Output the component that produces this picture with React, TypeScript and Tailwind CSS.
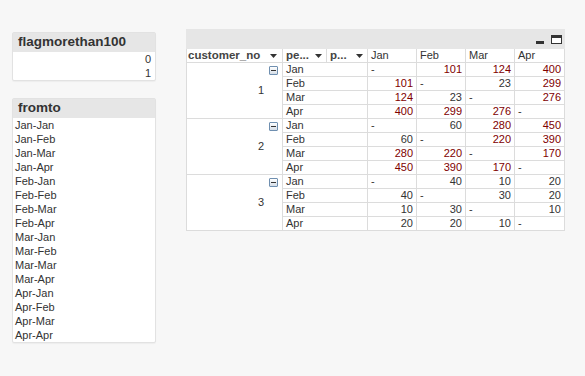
const months = ["Jan", "Feb", "Mar", "Apr"];

const fromto = months.flatMap((a) => months.map((b) => `${a}-${b}`));

// values per customer: rows = from month, cols = to month (null = "-")
const data: { id: number; rows: (number | null)[][] }[] = [
  {
    id: 1,
    rows: [
      [null, 101, 124, 400],
      [101, null, 23, 299],
      [124, 23, null, 276],
      [400, 299, 276, null],
    ],
  },
  {
    id: 2,
    rows: [
      [null, 60, 280, 450],
      [60, null, 220, 390],
      [280, 220, null, 170],
      [450, 390, 170, null],
    ],
  },
  {
    id: 3,
    rows: [
      [null, 40, 10, 20],
      [40, null, 30, 20],
      [10, 30, null, 10],
      [20, 20, 10, null],
    ],
  },
];

function Arrow() {
  return (
    <svg width="7" height="4" viewBox="0 0 7 4" className="shrink-0">
      <path d="M0 0h7L3.5 4z" fill="#333" />
    </svg>
  );
}

function Collapse() {
  return (
    <div className="w-[9px] h-[9px] border border-[#6f8fb0] rounded-[1px] bg-gradient-to-b from-white to-[#d5dde6] flex items-center justify-center">
      <div className="w-[5px] h-[1px] bg-[#333]" />
    </div>
  );
}

function ListBox({ title, items, align }: { title: string; items: string[]; align: "left" | "right" }) {
  return (
    <div className="w-[144px] border border-[#e2e2e2] rounded-[2px] bg-white shadow-[0_1px_1px_rgba(0,0,0,0.04)]">
      <div className="h-[19px] bg-[#e6e6e6] pl-[5px] flex items-center text-[13.5px] font-bold text-[#333]">
        {title}
      </div>
      <div>
        {items.map((it) => (
          <div
            key={it}
            className={`h-[14px] leading-[14px] text-[11px] text-[#333] ${
              align === "right" ? "text-right pr-[4px]" : "pl-[2px]"
            }`}
          >
            {it}
          </div>
        ))}
      </div>
    </div>
  );
}

export default function App() {
  const cell = "border-r border-b border-[#dcdcdc] h-[14px] leading-[13px] text-[11px]";
  return (
    <div
      className="w-[585px] h-[376px] bg-[#f7f7f7] flex overflow-hidden"
      style={{ fontFamily: '"Liberation Sans", Arial, sans-serif' }}
    >
      <div className="ml-[12px] mt-[32px] flex flex-col gap-[17px]">
        <ListBox title="flagmorethan100" items={["0", "1"]} align="right" />
        <ListBox title="fromto" items={fromto} align="left" />
      </div>

      <div className="ml-[30px] mt-[29px] w-[379px]">
        <div className="h-[20px] bg-[#e6e6e6] flex items-center justify-end pr-[3px] gap-[7px]">
          <div className="w-[8px] h-[3px] bg-[#333] mt-[6px]" />
          <div className="w-[11px] h-[9px] border border-[#333] border-t-[3px] bg-white" />
        </div>
        <div className="grid grid-cols-[96px_85px_49px_49px_49px_50px] bg-white border-l border-[#dcdcdc]">
          {/* header */}
          <div className={`${cell} font-bold text-[#444] flex items-center justify-between pl-[1px] pr-[5px]`}>
            <span className="text-[11.5px]">customer_no</span>
            <Arrow />
          </div>
          <div className={`${cell} border-r-0 flex`}>
            <div className="w-[44px] border-r border-[#dcdcdc] font-bold text-[#444] flex items-center justify-between pl-[3px] pr-[4px]">
              <span className="text-[11.5px]">pe...</span>
              <Arrow />
            </div>
            <div className="flex-1 border-r border-[#dcdcdc] font-bold text-[#444] flex items-center justify-between pl-[3px] pr-[4px]">
              <span className="text-[11.5px]">p...</span>
              <Arrow />
            </div>
          </div>
          {months.map((m) => (
            <div key={m} className={`${cell} text-[#333] pl-[3px]`}>
              {m}
            </div>
          ))}

          {/* body */}
          {data.map((c) => (
            <div key={c.id} className="contents">
              <div className="row-span-4 border-r border-b border-[#dcdcdc] relative flex items-center justify-end pr-[18px] text-[11px] text-[#333]">
                <div className="absolute top-[3px] right-[4px]">
                  <Collapse />
                </div>
                {c.id}
              </div>
              {c.rows.map((r, i) => (
                <div key={i} className="contents">
                  <div className={`${cell} text-[#333] pl-[3px] col-start-2`}>{months[i]}</div>
                  {r.map((v, j) =>
                    v === null ? (
                      <div key={j} className={`${cell} text-[#333] pl-[3px]`}>
                        -
                      </div>
                    ) : (
                      <div
                        key={j}
                        className={`${cell} text-right pr-[3px] ${v > 100 ? "text-[#800000]" : "text-[#333]"}`}
                      >
                        {v}
                      </div>
                    )
                  )}
                </div>
              ))}
            </div>
          ))}
        </div>
      </div>
    </div>
  );
}
